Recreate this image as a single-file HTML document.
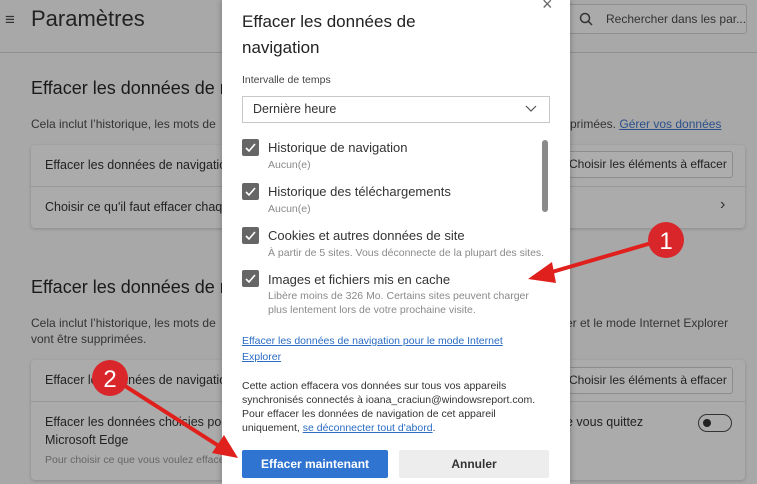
<!DOCTYPE html><html><head><meta charset="utf-8"><style>
*{margin:0;padding:0;box-sizing:border-box}
body{width:757px;height:484px;overflow:hidden;background:#a8a8a8;font-family:"Liberation Sans",sans-serif;position:relative;color:#1a1a1a}
.a{position:absolute;white-space:nowrap}
.card{position:absolute;left:31px;width:714px;background:#ababab;border-radius:4px;box-shadow:0 1px 3px rgba(0,0,0,.18)}
.bt{position:absolute;border:1px solid #8c8c8c;background:#adadad;border-radius:3px;font-size:12px;color:#222;padding:0 6px;height:27px;line-height:25px;white-space:nowrap;overflow:hidden}
.dlg{position:absolute;left:222px;top:0;width:348px;height:484px;background:#fff;box-shadow:0 0 6px rgba(0,0,0,.3)}
.cb{position:absolute;left:20px;width:17px;height:17px;background:#666;border-radius:2px}
.cb svg{position:absolute;left:2px;top:2px}
.t{position:absolute;left:46px;font-size:13px;color:#333;white-space:nowrap}
.s{position:absolute;left:46px;font-size:10.5px;color:#8a8a8a;white-space:nowrap}
</style></head><body>
<div class="a" style="left:5px;top:10px;font-size:17px;color:#333">≡</div>
<div class="a" style="left:31px;top:6px;font-size:22px;color:#222">Paramètres</div>
<div style="position:absolute;left:565px;top:4px;width:182px;height:30px;border:1px solid #8f8f8f;border-radius:3px;background:#aaa"></div>
<svg class="a" style="left:579px;top:12px" width="14" height="14"><circle cx="6" cy="6" r="4.5" fill="none" stroke="#333" stroke-width="1.5"/><line x1="9.5" y1="9.5" x2="13" y2="13" stroke="#333" stroke-width="1.5"/></svg>
<div class="a" style="left:606px;top:12px;font-size:12px;color:#333">Rechercher dans les par...</div>
<div style="position:absolute;left:0;top:52px;width:757px;height:1px;background:#8f8f8f"></div>
<div class="a" style="left:31px;top:78px;font-size:18px">Effacer les données de n</div>
<div class="a" style="left:31px;top:117px;font-size:12px;color:#333">Cela inclut l’historique, les mots de</div>
<div class="a" style="left:570px;top:117px;font-size:12px;color:#333">primées. <span style="color:#2a4f8a;text-decoration:underline">Gérer vos données</span></div>
<div class="card" style="top:145px;height:83px"></div>
<div style="position:absolute;left:31px;top:186px;width:714px;height:1px;background:#999"></div>
<div class="a" style="left:45px;top:158px;font-size:12.5px;color:#222">Effacer les données de navigation</div>
<div class="bt" style="left:562px;top:151px;width:171px">Choisir les éléments à effacer</div>
<div class="a" style="left:45px;top:200px;font-size:12.5px;color:#222">Choisir ce qu'il faut effacer chaque</div>
<div class="a" style="left:720px;top:196px;font-size:16px;color:#333">›</div>
<div class="a" style="left:31px;top:277px;font-size:18px">Effacer les données de n</div>
<div class="a" style="left:31px;top:316px;font-size:12px;color:#333">Cela inclut l’historique, les mots de</div>
<div class="a" style="left:31px;top:332px;font-size:12px;color:#333">vont être supprimées.</div>
<div class="a" style="left:566px;top:316px;font-size:12px;color:#333">er et le mode Internet Explorer</div>
<div class="card" style="top:360px;height:120px"></div>
<div style="position:absolute;left:31px;top:401px;width:714px;height:1px;background:#999"></div>
<div class="a" style="left:45px;top:373px;font-size:12.5px;color:#222">Effacer les données de navigation</div>
<div class="bt" style="left:562px;top:367px;width:171px">Choisir les éléments à effacer</div>
<div class="a" style="left:45px;top:415px;font-size:12.5px;color:#222">Effacer les données choisies pou</div>
<div class="a" style="left:45px;top:433px;font-size:12.5px;color:#222">Microsoft Edge</div>
<div class="a" style="left:45px;top:454px;font-size:10.5px;color:#666">Pour choisir ce que vous voulez efface</div>
<div class="a" style="left:566px;top:415px;font-size:12.5px;color:#222">e vous quittez</div>
<div style="position:absolute;left:698px;top:414px;width:34px;height:18px;border:1.5px solid #333;border-radius:9px"></div>
<div style="position:absolute;left:703px;top:419px;width:8px;height:8px;border-radius:50%;background:#222"></div>

<div class="dlg">
<div class="a" style="left:320px;top:-6px;font-size:18px;color:#666">×</div>
<div class="a" style="left:20px;top:9px;font-size:17px;line-height:26px;color:#222">Effacer les données de<br>navigation</div>
<div class="a" style="left:20px;top:74px;font-size:10.5px;color:#444">Intervalle de temps</div>
<div style="position:absolute;left:20px;top:96px;width:308px;height:27px;border:1px solid #c8c8c8"></div>
<div class="a" style="left:31px;top:102px;font-size:12.5px;color:#333">Dernière heure</div>
<svg class="a" style="left:303px;top:105px" width="12" height="8"><path d="M1 1l5 5 5-5" fill="none" stroke="#555" stroke-width="1.2"/></svg>
<div style="position:absolute;left:320px;top:140px;width:6px;height:72px;background:#8a8a8a;border-radius:3px"></div>
<div class="cb" style="top:139px"><svg width="13" height="13"><path d="M2 7l3 3 6-7" fill="none" stroke="#fff" stroke-width="1.6"/></svg></div>
<div class="t" style="top:140px">Historique de navigation</div><div class="s" style="top:159px">Aucun(e)</div>
<div class="cb" style="top:183px"><svg width="13" height="13"><path d="M2 7l3 3 6-7" fill="none" stroke="#fff" stroke-width="1.6"/></svg></div>
<div class="t" style="top:184px">Historique des téléchargements</div><div class="s" style="top:203px">Aucun(e)</div>
<div class="cb" style="top:227px"><svg width="13" height="13"><path d="M2 7l3 3 6-7" fill="none" stroke="#fff" stroke-width="1.6"/></svg></div>
<div class="t" style="top:228px">Cookies et autres données de site</div><div class="s" style="top:247px">À partir de 5 sites. Vous déconnecte de la plupart des sites.</div>
<div class="cb" style="top:270px"><svg width="13" height="13"><path d="M2 7l3 3 6-7" fill="none" stroke="#fff" stroke-width="1.6"/></svg></div>
<div class="t" style="top:272px">Images et fichiers mis en cache</div>
<div class="s" style="top:290px">Libère moins de 326 Mo. Certains sites peuvent charger</div>
<div class="s" style="top:304px">plus lentement lors de votre prochaine visite.</div>
<div class="a" style="left:20px;top:333px;font-size:10.5px;line-height:16px;color:#2b6cc4;text-decoration:underline">Effacer les données de navigation pour le mode Internet<br>Explorer</div>
<div class="a" style="left:20px;top:379px;font-size:10.5px;line-height:14px;color:#333">Cette action effacera vos données sur tous vos appareils<br>synchronisés connectés à ioana_craciun@windowsreport.com.<br>Pour effacer les données de navigation de cet appareil<br>uniquement, <span style="color:#2b6cc4;text-decoration:underline">se déconnecter tout d'abord</span>.</div>
<div style="position:absolute;left:20px;top:450px;width:146px;height:28px;background:#2f74d0;border-radius:2px;color:#fff;font-size:12px;font-weight:bold;text-align:center;line-height:28px">Effacer maintenant</div>
<div style="position:absolute;left:177px;top:450px;width:150px;height:28px;background:#ededed;border-radius:2px;color:#333;font-size:12px;font-weight:bold;text-align:center;line-height:28px">Annuler</div>
</div>

<svg style="position:absolute;left:0;top:0" width="757" height="484">
<line x1="655" y1="242" x2="545" y2="274" stroke="#e0201c" stroke-width="4"/>
<polygon points="528,279 552,262 556,283" fill="#e0201c"/>
<circle cx="666" cy="240" r="18" fill="#d8262a"/>
<text x="666" y="249" font-family="Liberation Sans" font-size="24" fill="#fff" text-anchor="middle">1</text>
<line x1="122" y1="384" x2="222" y2="448" stroke="#e0201c" stroke-width="4"/>
<polygon points="238,458 212,453 224,435" fill="#e0201c"/>
<circle cx="110" cy="378" r="18" fill="#d8262a"/>
<text x="110" y="387" font-family="Liberation Sans" font-size="24" fill="#fff" text-anchor="middle">2</text>
</svg>
</body></html>
